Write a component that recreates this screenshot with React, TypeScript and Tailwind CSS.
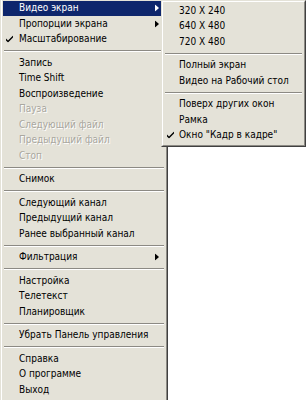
import React from 'react';

type Item =
  | { kind: 'sep' }
  | { kind: 'item'; label: string; checked?: boolean; disabled?: boolean; sub?: boolean; active?: boolean };

const sep: Item = { kind: 'sep' };
const it = (label: string, opts: Partial<Omit<Extract<Item, { kind: 'item' }>, 'kind' | 'label'>> = {}): Item => ({
  kind: 'item',
  label,
  ...opts,
});

const mainItems: Item[] = [
  it('Видео экран', { sub: true, active: true }),
  it('Пропорции экрана', { sub: true }),
  it('Масштабирование', { checked: true }),
  sep,
  it('Запись'),
  it('Time Shift'),
  it('Воспроизведение'),
  it('Пауза', { disabled: true }),
  it('Следующий файл', { disabled: true }),
  it('Предыдущий файл', { disabled: true }),
  it('Стоп', { disabled: true }),
  sep,
  it('Снимок'),
  sep,
  it('Следующий канал'),
  it('Предыдущий канал'),
  it('Ранее выбранный канал'),
  sep,
  it('Фильтрация', { sub: true }),
  sep,
  it('Настройка'),
  it('Телетекст'),
  it('Планировщик'),
  sep,
  it('Убрать Панель управления'),
  sep,
  it('Справка'),
  it('О программе'),
  it('Выход'),
];

const subItems: Item[] = [
  it('320 X 240'),
  it('640 X 480'),
  it('720 X 480'),
  sep,
  it('Полный экран'),
  it('Видео на Рабочий стол'),
  sep,
  it('Поверх других окон'),
  it('Рамка'),
  it('Окно "Кадр в кадре"', { checked: true }),
];

const Check = ({ light }: { light?: boolean }) => (
  <svg width="7" height="7" viewBox="0 0 7 7" className="absolute left-[3px] top-1/2 -translate-y-1/2">
    <path d="M0 3 L0 5 L2 7 L7 2 L7 0 L2 5 Z" fill={light ? '#ffffff' : '#000000'} />
  </svg>
);

const Arrow = ({ light }: { light?: boolean }) => (
  <svg width="4" height="7" viewBox="0 0 4 7" className="absolute right-[6px] top-1/2 -translate-y-1/2">
    <path d="M0 0 L4 3.5 L0 7 Z" fill={light ? '#ffffff' : '#000000'} />
  </svg>
);

function MenuList({ items, pad }: { items: Item[]; pad: string }) {
  return (
    <div className="flex flex-col">
      {items.map((m, i) =>
        m.kind === 'sep' ? (
          <div key={i} className="h-[8px] flex flex-col justify-center mx-[1px]">
            <div className="h-px bg-[#8c8a84]" />
            <div className="h-px bg-white" />
          </div>
        ) : (
          <div
            key={i}
            className={`relative h-[15.5px] flex items-center ${pad} ${
              m.active ? 'bg-[#0e266c] text-white' : m.disabled ? 'text-[#a9a79f]' : 'text-black'
            }`}
          >
            {m.checked && <Check light={m.active} />}
            <span className={m.disabled ? '[text-shadow:1px_1px_0_#ffffff]' : ''}>{m.label}</span>
            {m.sub && <Arrow light={m.active} />}
          </div>
        )
      )}
    </div>
  );
}

export default function App() {
  return (
    <div
      className="relative w-[306px] h-[400px] bg-white overflow-hidden text-[10px] leading-none"
      style={{ fontFamily: '"DejaVu Sans Condensed", "DejaVu Sans", sans-serif' }}
    >
      <div className="w-[168px] bg-[#e4e2d8] border-l border-r border-b border-l-[#e4e2d8] border-r-[#404040] border-b-[#404040]">
        <div className="border-l border-r border-b border-l-white border-r-[#8c8a84] border-b-[#8c8a84] pt-[0.5px] pb-[2px] px-[1px]">
          <MenuList items={mainItems} pad="pl-[16px]" />
        </div>
      </div>

      <div className="absolute left-[161px] top-0 w-[145px] bg-[#e4e2d8] border border-t-[#e4e2d8] border-l-[#e4e2d8] border-r-[#404040] border-b-[#404040]">
        <div className="border border-t-white border-l-white border-r-[#8c8a84] border-b-[#8c8a84] pt-[1px] pb-[2px] px-[1px]">
          <MenuList items={subItems} pad="pl-[15px]" />
        </div>
      </div>
    </div>
  );
}
